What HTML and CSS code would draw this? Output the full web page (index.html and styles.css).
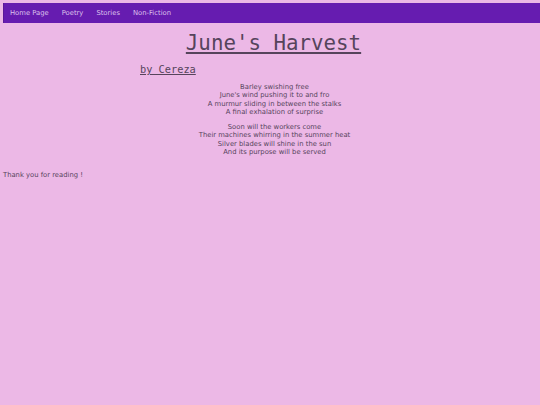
FILE: index.html
```html
<!DOCTYPE html>
<html>
<head>
<meta charset="utf-8">
<link rel="stylesheet" href="styles.css">
</head>
<body>
<nav class="nav">
  <a class="nav-link" href="#">Home Page</a>
  <a class="nav-link" href="#">Poetry</a>
  <a class="nav-link" href="#">Stories</a>
  <a class="nav-link" href="#">Non-Fiction</a>
</nav>
<main class="content">
  <h1 class="title">June's Harvest</h1>
  <h3 class="author">by Cereza</h3>
  <div class="poem">
    <p class="stanza">Barley swishing free<br>June's wind pushing it to and fro<br>A murmur sliding in between the stalks<br>A final exhalation of surprise</p>
    <p class="stanza">Soon will the workers come<br>Their machines whirring in the summer heat<br>Silver blades will shine in the sun<br>And its purpose will be served</p>
  </div>
  <p class="thanks">Thank you for reading !</p>
</main>
</body>
</html>
```

FILE: styles.css
```css
html, body {
  margin: 0;
  padding: 0;
  background: #ecb8e6;
}
body {
  padding: 3px 0 0 3px;
  font-family: "DejaVu Sans", sans-serif;
  color: #56445c;
}
.nav {
  display: flex;
  align-items: center;
  height: 20px;
  background: #661cb0;
  border-left: 1px solid #5a1898;
}
.nav-link {
  color: #dcc2ec;
  text-decoration: none;
  font-size: 6.8px;
  padding: 0 6.5px;
}
.nav-link:first-child {
  padding-left: 6px;
}
.content {
  padding-top: 5px;
}
.title {
  margin: 0;
  font-family: "DejaVu Sans Mono", monospace;
  font-weight: normal;
  font-size: 20.8px;
  line-height: 30px;
  text-align: center;
  text-decoration: underline;
  color: #56445c;
  padding-left: 4px;
}
.author {
  margin: 4px 0 0 137px;
  font-family: "DejaVu Sans Mono", monospace;
  font-weight: normal;
  font-size: 10.3px;
  line-height: 14px;
  text-decoration: underline;
  color: #56445c;
}
.poem {
  margin-top: 7px;
  text-align: center;
  font-size: 6.8px;
  line-height: 8.3px;
  padding-left: 6px;
}
.stanza {
  margin: 0 0 6.8px 0;
}
.thanks {
  margin: 15px 0 0 0;
  font-size: 6.8px;
  line-height: 8.3px;
}
```
